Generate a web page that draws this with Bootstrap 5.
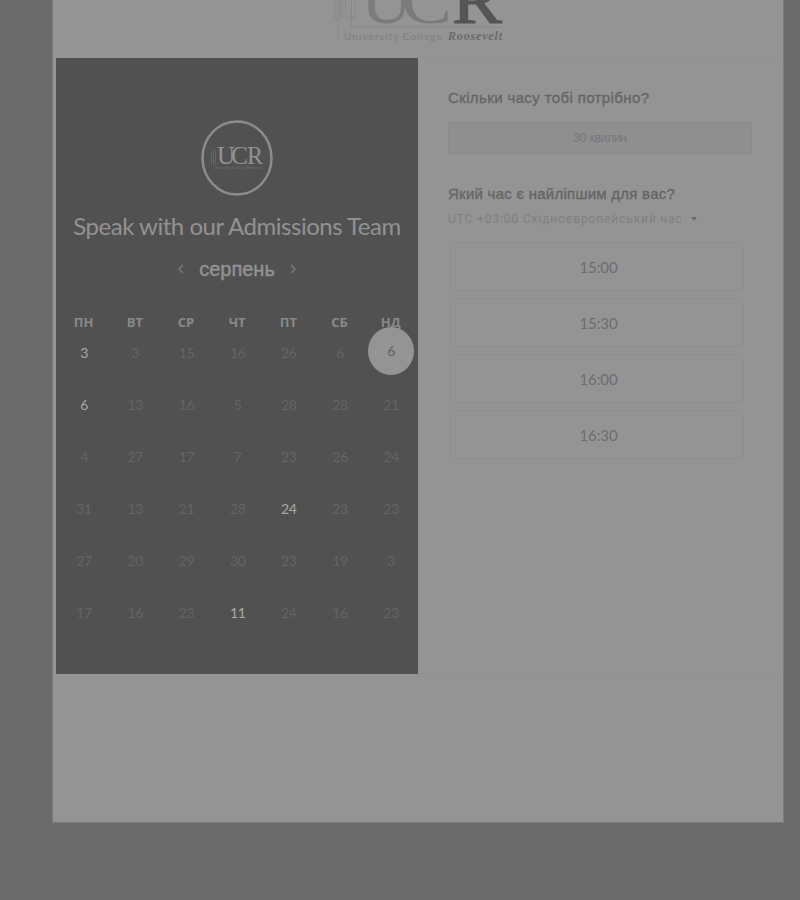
<!DOCTYPE html>
<html lang="uk">
<head>
<meta charset="utf-8">
<meta name="viewport" content="width=device-width, initial-scale=1">
<title>Speak with our Admissions Team</title>
<link href="https://cdn.jsdelivr.net/npm/bootstrap@5.3.0/dist/css/bootstrap.min.css" rel="stylesheet">
<style>
body{background:#6b6b6b;font-family:"Liberation Sans",Arial,sans-serif;height:900px;overflow:hidden}
.sheet{width:732px;height:823px;margin-left:52px;background:#949494;border:1px solid #7b7b7b;border-top:0;padding-left:3px}
.brand-bar{height:58px}
.brand-bar svg{display:block;margin-left:264px}
.booking{height:616px}
.cal-panel{width:362px;background:#515151;color:#929292;padding-top:62px}
.seal{display:block}
.cal-title{font:400 24px/30px Lato,sans-serif;margin-top:15px;white-space:nowrap;letter-spacing:-.48px}
.month-row{height:30px;margin-top:13px;gap:13px}
.month-name{font-size:20px;line-height:30px;-webkit-text-stroke:.45px #929292}
.cal-grid{display:grid;grid-template-columns:repeat(7,51.2px);margin-left:2px;text-align:center;font:400 14px/20px Lato,sans-serif;letter-spacing:-.4px}
.weekdays{margin-top:28px;height:14px;font:700 13px/20px "Open Sans",sans-serif;letter-spacing:0;color:#898989}
.day-cell{height:52px;padding:17px 0 0 1px;color:#646464}
.day-open{color:#a8a8a8}
.day-picked{display:block;width:46px;height:48px;line-height:48px;border-radius:50%;background:#949494;color:#626262;margin:-16px auto 0;position:relative}
.times-panel{width:361px;padding:29px 33px 0 30px;border:1px solid #919191;border-left:0}
.question{font-size:15px;line-height:20px;color:#656565;margin:0;-webkit-text-stroke:.35px #656565;white-space:nowrap;letter-spacing:.38px}
.question-time{margin-top:30px;letter-spacing:.25px}
.duration{height:32px;margin-top:14px;width:304px;background:#8f8f8f;border:1px solid #8a8a8a;border-radius:2px;font-size:12px;letter-spacing:-.3px;color:#777}
.zone{font:400 12px/18px Roboto,sans-serif;letter-spacing:.88px;color:#7f7f7f;margin-top:6px;white-space:nowrap}
.slots{margin:14px 0 0 2px;width:294px;gap:7px}
.slot{height:49px;border:1px solid #8e8e8e;border-radius:4px;color:#6c6c6c;background:transparent;font:400 15px/20px Lato,sans-serif;letter-spacing:-.1px;padding:0 0 0 3px}
</style>
</head>
<body>
<main class="sheet">
<header class="brand-bar">
<svg width="210" height="48" viewBox="320 0 210 48" role="img" aria-label="University College Roosevelt">
<g fill="none" stroke="#898989" stroke-width="1"><path d="M334.500 0V18Q337 23 340.500 17V0M338 0V41M342.500 0V17M345.500 0V17L349 20L351.500 10M351.500 0V27H502M355.500 0V20L352 16"/></g>
<g font-family="Liberation Serif, serif"><text x="361" y="23" font-size="68" fill="#7b7b7b" textLength="51" lengthAdjust="spacingAndGlyphs">U</text><text x="401" y="23" font-size="68" fill="#7b7b7b" textLength="51" lengthAdjust="spacingAndGlyphs">C</text><text x="452" y="23" font-size="68" fill="#555" stroke="#555" stroke-width="1.200" textLength="50" lengthAdjust="spacingAndGlyphs">R</text>
<text x="448" y="40" font-size="12" font-style="italic" font-weight="700" fill="#6b6b6b" textLength="54">Roosevelt</text></g>
<text x="344" y="40" font-family="Lato, sans-serif" font-size="10" fill="#7e7e7e" textLength="98">University College</text>
</svg>
</header>
<div class="booking d-flex">
<section class="cal-panel">
<div class="d-flex justify-content-center">
<svg class="seal" width="72" height="76" viewBox="0 0 72 76" role="img" aria-label="UCR"><ellipse cx="36" cy="38" rx="34.500" ry="36.500" fill="none" stroke="#8c8c8c" stroke-width="2.500"/>
<path d="M10.500 32V45M12.500 29V45M14.500 31V45" stroke="#646464"/><g font-family="Liberation Serif, serif" fill="#929292" font-size="26"><text x="16" y="44" textLength="18" lengthAdjust="spacingAndGlyphs">U</text><text x="30" y="44" textLength="17" lengthAdjust="spacingAndGlyphs">C</text><text x="46" y="44" textLength="16" lengthAdjust="spacingAndGlyphs">R</text></g>
<text x="13" y="49" font-family="Lato, sans-serif" font-size="4" fill="#717171" textLength="48">University College Roosevelt</text></svg>
</div>
<h1 class="cal-title text-center mb-0">Speak with our Admissions Team</h1>
<div class="month-row d-flex justify-content-center align-items-center">
<svg width="10" height="12" viewBox="0 0 10 12" fill="none" stroke="#7b7b7b" stroke-width="1.400"><path d="M7 2L3 6L7 10"/></svg>
<span class="month-name">серпень</span>
<svg width="10" height="12" viewBox="0 0 10 12" fill="none" stroke="#7b7b7b" stroke-width="1.400"><path d="M3 2L7 6L3 10"/></svg>
</div>
<div class="cal-grid weekdays"><span>ПН</span><span>ВТ</span><span>СР</span><span>ЧТ</span><span>ПТ</span><span>СБ</span><span>НД</span></div>
<div class="cal-grid">
<span class="day-cell day-open">3</span><span class="day-cell">3</span><span class="day-cell">15</span><span class="day-cell">16</span><span class="day-cell">26</span><span class="day-cell">6</span><span class="day-cell"><span class="day-picked">6</span></span>
<span class="day-cell day-open">6</span><span class="day-cell">13</span><span class="day-cell">16</span><span class="day-cell">5</span><span class="day-cell">28</span><span class="day-cell">28</span><span class="day-cell">21</span>
<span class="day-cell">4</span><span class="day-cell">27</span><span class="day-cell">17</span><span class="day-cell">7</span><span class="day-cell">23</span><span class="day-cell">26</span><span class="day-cell">24</span>
<span class="day-cell">31</span><span class="day-cell">13</span><span class="day-cell">21</span><span class="day-cell">28</span><span class="day-cell day-open">24</span><span class="day-cell">23</span><span class="day-cell">23</span>
<span class="day-cell">27</span><span class="day-cell">20</span><span class="day-cell">29</span><span class="day-cell">30</span><span class="day-cell">23</span><span class="day-cell">19</span><span class="day-cell">3</span>
<span class="day-cell">17</span><span class="day-cell">16</span><span class="day-cell">23</span><span class="day-cell day-open">11</span><span class="day-cell">24</span><span class="day-cell">16</span><span class="day-cell">23</span>
</div>
</section>
<section class="times-panel">
<h2 class="question">Скільки часу тобі потрібно?</h2>
<div class="duration d-flex justify-content-center align-items-center">30 хвилин</div>
<h2 class="question question-time">Який час є найліпшим для вас?</h2>
<div class="zone d-flex align-items-center gap-2"><span>UTC +03:00 Східноєвропейський час</span><svg width="6" height="4" viewBox="0 0 6 4"><path d="M0 0H6L3 4Z" fill="#6b6b6b"/></svg></div>
<div class="slots d-flex flex-column"><button class="slot">15:00</button><button class="slot">15:30</button><button class="slot">16:00</button><button class="slot">16:30</button></div>
</section>
</div>
</main>
<script src="https://cdn.jsdelivr.net/npm/bootstrap@5.3.0/dist/js/bootstrap.bundle.min.js"></script>
</body>
</html>
